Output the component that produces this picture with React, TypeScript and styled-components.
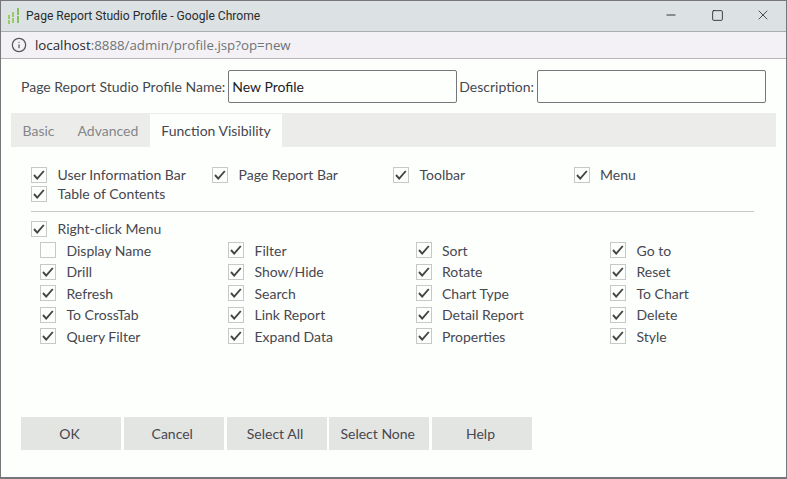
import React from 'react';
import styled, { createGlobalStyle } from 'styled-components';
import { Info, Minus, Square, X } from 'lucide-react';

const GlobalStyle = createGlobalStyle`
  html, body {
    margin: 0;
    padding: 0;
    background: #fdfffd;
  }
  * {
    box-sizing: border-box;
  }
`;

const Window = styled.div`
  width: 787px;
  height: 479px;
  display: flex;
  flex-direction: column;
  border: 1px solid #77777b;
  border-bottom-width: 2px;
  background: #fdfffd;
  font-family: Lato, 'Liberation Sans', sans-serif;
  font-size: 14px;
  color: #474750;
  overflow: hidden;
`;

const TitleBar = styled.div`
  height: 31px;
  flex: none;
  display: flex;
  align-items: center;
  padding-left: 6px;
  background: #dce1e3;
  border-bottom: 1px solid #a9acb0;
`;

const AppTitle = styled.span`
  margin-left: 5px;
  font-family: Roboto, 'Noto Sans', sans-serif;
  font-size: 12.1px;
  color: #2a2c2e;
`;

const WindowButtons = styled.div`
  margin-left: auto;
  padding-bottom: 2px;
  display: flex;
  align-items: center;
`;

const WindowButton = styled.span`
  width: 46px;
  height: 28px;
  display: flex;
  align-items: center;
  justify-content: center;
  color: #000;
`;

const AddressBar = styled.div`
  height: 27px;
  flex: none;
  display: flex;
  align-items: center;
  gap: 8px;
  padding-left: 10px;
  background: #f3f1f5;
  border-bottom: 1px solid #b5b5ba;
  font-family: 'Open Sans', 'Noto Sans', sans-serif;
  font-size: 13.3px;
  color: #6f7478;
`;

const Host = styled.span`
  color: #26282a;
`;

const Content = styled.div`
  flex: 1;
  display: flex;
  flex-direction: column;
  padding: 11px 10px 0 10px;
`;

const NameRow = styled.div`
  height: 33px;
  display: flex;
  align-items: center;
  padding-left: 10px;
`;

const TextInput = styled.input`
  width: 229px;
  height: 33px;
  margin: 0 2px 0 3px;
  padding: 0 3px;
  border: 1px solid #77777b;
  border-radius: 2px;
  background: #fdfffd;
  font-family: Lato, 'Liberation Sans', sans-serif;
  font-size: 14px;
  color: #1e2126;
  outline: none;
`;

const Tabs = styled.div`
  width: 765px;
  height: 34px;
  margin-top: 10px;
  display: flex;
  background: #ecedeb;
`;

const Tab = styled.div<{ $active?: boolean }>`
  display: flex;
  align-items: center;
  padding: 0 11.5px;
  margin-top: ${({ $active }) => ($active ? '1px' : '0')};
  background: ${({ $active }) => ($active ? '#fdfffd' : 'transparent')};
  color: ${({ $active }) => ($active ? '#474750' : '#84868a')};
`;

const TopOptions = styled.div`
  display: grid;
  grid-template-columns: 181px 181px 180.5px 120px;
  grid-auto-rows: 19px;
  margin: 18px 0 0 20px;
`;

const Divider = styled.div`
  width: 723px;
  height: 1px;
  margin: 8px 0 0 20px;
  background: #c6c7c6;
`;

const RightClickRow = styled.div`
  margin: 7px 0 0 20px;
  height: 19px;
  display: flex;
`;

const MenuOptions = styled.div`
  display: grid;
  grid-template-columns: 188px 187.5px 194.5px 120px;
  grid-auto-rows: 21.5px;
  margin: 1.5px 0 0 29px;
`;

const OptionLabel = styled.label`
  display: flex;
  align-items: center;
  white-space: nowrap;
`;

const CheckBox = styled.span`
  width: 16px;
  height: 16px;
  flex: none;
  display: flex;
  align-items: center;
  justify-content: center;
  margin-right: 10.5px;
  border: 1px solid #c8c8c8;
  background: #fdfffd;
`;

const Buttons = styled.div`
  margin-top: auto;
  margin-bottom: 27px;
  margin-left: 10px;
  display: flex;
  gap: 2.75px;
`;

const ActionButton = styled.button`
  width: 100px;
  height: 33px;
  padding: 0 3px 0 0;
  border: none;
  background: #e3e5e2;
  font-family: Lato, 'Liberation Sans', sans-serif;
  font-size: 14px;
  color: #474750;
`;

const AppIcon = () => (
  <svg width="14" height="17" viewBox="0 0 14 17">
    <path d="M2 7v9" stroke="#84c441" strokeWidth="1.5" strokeDasharray="4 1" />
    <path d="M6 4v12" stroke="#84c441" strokeWidth="1.5" strokeDasharray="5 1" />
    <path d="M11 0v16" stroke="#74b83a" strokeWidth="1.6" strokeDasharray="7 1" />
  </svg>
);

const Option: React.FC<{ label: string; checked?: boolean }> = ({ label, checked = true }) => (
  <OptionLabel>
    <CheckBox>
      {checked && (
        <svg width="12" height="10" viewBox="0 0 12 10">
          <path d="M1 5l3.2 3.6L10.8 1" fill="none" stroke="#444" strokeWidth="1.9" />
        </svg>
      )}
    </CheckBox>
    {label}
  </OptionLabel>
);

const topOptions = ['User Information Bar', 'Page Report Bar', 'Toolbar', 'Menu', 'Table of Contents'];

const menuOptions = [
  'Display Name', 'Filter', 'Sort', 'Go to',
  'Drill', 'Show/Hide', 'Rotate', 'Reset',
  'Refresh', 'Search', 'Chart Type', 'To Chart',
  'To CrossTab', 'Link Report', 'Detail Report', 'Delete',
  'Query Filter', 'Expand Data', 'Properties', 'Style',
];

const actions = ['OK', 'Cancel', 'Select All', 'Select None', 'Help'];

export default function App() {
  return (
    <Window>
      <GlobalStyle />
      <TitleBar>
        <AppIcon />
        <AppTitle>Page Report Studio Profile - Google Chrome</AppTitle>
        <WindowButtons>
          <WindowButton><Minus size={14} strokeWidth={1.3} /></WindowButton>
          <WindowButton><Square size={13} strokeWidth={1.3} /></WindowButton>
          <WindowButton><X size={16} strokeWidth={1} /></WindowButton>
        </WindowButtons>
      </TitleBar>
      <AddressBar>
        <Info size={16} strokeWidth={1.9} color="#55585b" />
        <span><Host>localhost</Host>:8888/admin/profile.jsp?op=new</span>
      </AddressBar>
      <Content>
        <NameRow>
          Page Report Studio Profile Name:
          <TextInput defaultValue="New Profile" />
          Description:
          <TextInput />
        </NameRow>
        <Tabs>
          <Tab>Basic</Tab>
          <Tab>Advanced</Tab>
          <Tab $active>Function Visibility</Tab>
        </Tabs>
        <TopOptions>
          {topOptions.map((label) => (
            <Option key={label} label={label} />
          ))}
        </TopOptions>
        <Divider />
        <RightClickRow>
          <Option label="Right-click Menu" />
        </RightClickRow>
        <MenuOptions>
          {menuOptions.map((label) => (
            <Option key={label} label={label} checked={label !== 'Display Name'} />
          ))}
        </MenuOptions>
        <Buttons>
          {actions.map((label) => (
            <ActionButton key={label}>{label}</ActionButton>
          ))}
        </Buttons>
      </Content>
    </Window>
  );
}
